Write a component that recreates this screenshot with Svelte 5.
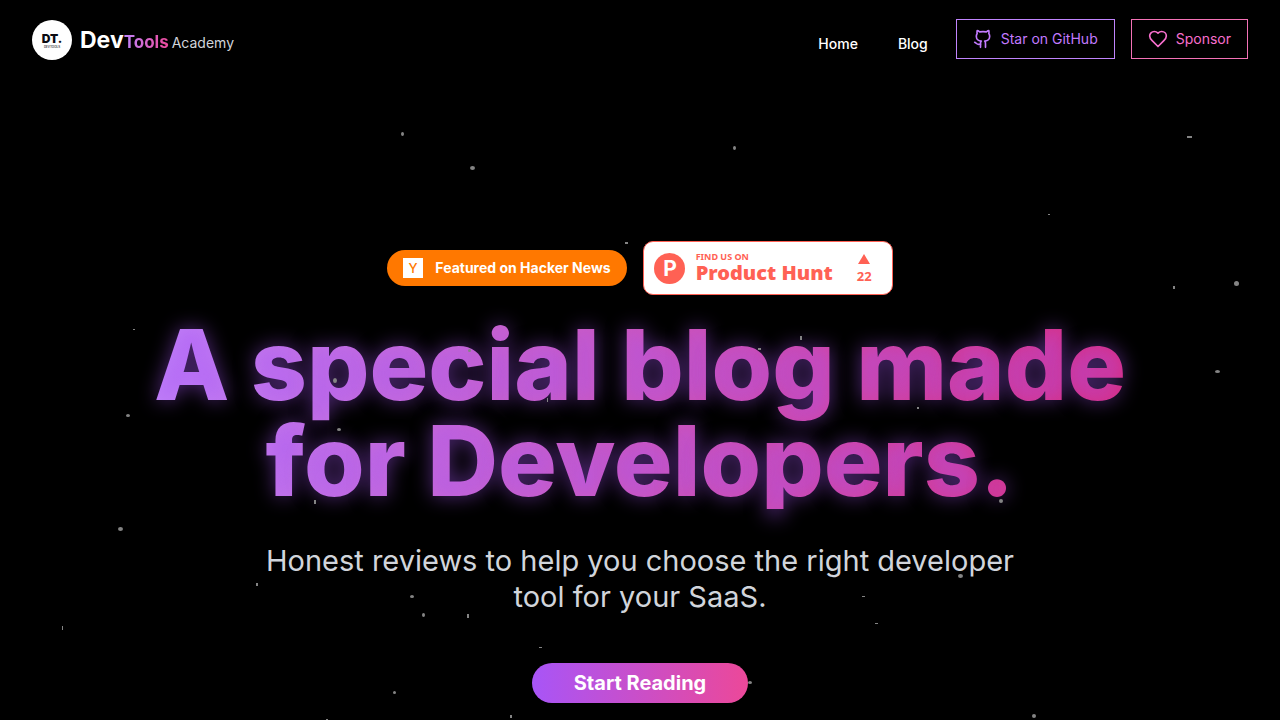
<script lang="ts">
  type Star = { x: number; y: number; w: number; h: number };

  // Star field on a 1280 x 720 canvas: centre and size.
  const stars: Star[] = [
    { x: 402, y: 134, w: 3, h: 4 },
    { x: 472, y: 168, w: 5, h: 4 },
    { x: 734, y: 148, w: 3, h: 4 },
    { x: 1189, y: 137, w: 5, h: 2 },
    { x: 1049, y: 214, w: 2, h: 1 },
    { x: 626, y: 243, w: 3, h: 2 },
    { x: 1174, y: 287, w: 2, h: 3 },
    { x: 1236, y: 283, w: 5, h: 5 },
    { x: 134, y: 329, w: 2, h: 1 },
    { x: 1217, y: 371, w: 5, h: 3 },
    { x: 801, y: 338, w: 2, h: 4 },
    { x: 469, y: 350, w: 3, h: 3 },
    { x: 759, y: 349, w: 3, h: 2 },
    { x: 335, y: 380, w: 4, h: 5 },
    { x: 547, y: 400, w: 1, h: 4 },
    { x: 918, y: 408, w: 2, h: 2 },
    { x: 128, y: 415, w: 4, h: 3 },
    { x: 339, y: 429, w: 4, h: 3 },
    { x: 315, y: 502, w: 2, h: 4 },
    { x: 1001, y: 501, w: 4, h: 4 },
    { x: 120, y: 529, w: 5, h: 4 },
    { x: 960, y: 576, w: 5, h: 4 },
    { x: 257, y: 584, w: 2, h: 3 },
    { x: 412, y: 596, w: 4, h: 3 },
    { x: 863, y: 596, w: 3, h: 1 },
    { x: 423, y: 615, w: 3, h: 4 },
    { x: 468, y: 616, w: 2, h: 4 },
    { x: 876, y: 623, w: 3, h: 1 },
    { x: 62, y: 628, w: 1, h: 4 },
    { x: 540, y: 647, w: 3, h: 1 },
    { x: 750, y: 682, w: 4, h: 3 },
    { x: 394, y: 692, w: 3, h: 3 },
    { x: 511, y: 716, w: 2, h: 3 },
    { x: 1034, y: 716, w: 4, h: 4 },
    { x: 327, y: 720, w: 2, h: 2 },
  ];

  const left = (s: Star) => ((s.x - Math.floor(s.w / 2)) / 1280) * 100;
  const top = (s: Star) => ((s.y - Math.floor(s.h / 2)) / 720) * 100;
</script>

<div class="page">
  <header>
    <a class="brand" href="/">
      <svg class="logo" viewBox="0 0 40 40" aria-hidden="true">
        <circle cx="20" cy="20" r="20" fill="#fff" />
        <text class="mark" x="20" y="23" text-anchor="middle">DT.</text>
        <text class="sub" x="20" y="28" text-anchor="middle">DEVTOOLS</text>
      </svg>
      <span class="name"><b class="dev">Dev</b><b class="tools">Tools</b><span class="academy">Academy</span></span>
    </a>

    <nav>
      <div class="links">
        <a href="/">Home</a>
        <a href="/blog">Blog</a>
      </div>
      <div class="actions">
        <a class="action github" href="https://github.com">
          <svg viewBox="0 0 24 24" aria-hidden="true">
            <path d="M15 22v-4a4.8 4.8 0 0 0-1-3.5c3 0 6-2 6-5.5.08-1.25-.27-2.48-1-3.5.28-1.15.28-2.35 0-3.5 0 0-1 0-3 1.5-2.64-.5-5.36-.5-8 0C6 2 5 2 5 2c-.3 1.15-.3 2.35 0 3.5A5.403 5.403 0 0 0 4 9c0 3.5 3 5.5 6 5.5-.39.49-.68 1.05-.85 1.65-.17.6-.22 1.23-.15 1.85v4" />
            <path d="M9 18c-4.51 2-5-2-7-2" />
          </svg>
          Star on GitHub
        </a>
        <a class="action sponsor" href="/sponsor">
          <svg viewBox="0 0 24 24" aria-hidden="true">
            <path d="M19 14c1.49-1.46 3-3.21 3-5.5A5.5 5.5 0 0 0 16.5 3c-1.76 0-3 .5-4.5 2-1.5-1.5-2.74-2-4.5-2A5.5 5.5 0 0 0 2 8.5c0 2.3 1.5 4.05 3 5.5l7 7Z" />
          </svg>
          Sponsor
        </a>
      </div>
    </nav>
  </header>

  <main>
    <div class="badges">
      <a class="hn" href="https://news.ycombinator.com">
        <svg viewBox="0 0 20 20" aria-hidden="true">
          <rect width="20" height="20" fill="#fff" />
          <text x="10" y="15" text-anchor="middle">Y</text>
        </svg>
        <span>Featured on Hacker News</span>
      </a>
      <a class="ph" href="https://www.producthunt.com">
        <svg viewBox="0 0 31 31" aria-hidden="true">
          <circle cx="15.5" cy="15.5" r="15.5" />
          <text x="16" y="23" text-anchor="middle">P</text>
        </svg>
        <span class="ph-text"><small>FIND US ON</small><strong>Product Hunt</strong></span>
        <span class="votes"><i class="up"></i>22</span>
      </a>
    </div>

    <h1>A special blog made for Developers.</h1>
    <p>Honest reviews to help you choose the right developer tool for your SaaS.</p>
    <a class="cta" href="/blog">Start Reading</a>
  </main>

  <div class="sky" aria-hidden="true">
    {#each stars as s}
      <i
        class="star"
        class:round={Math.min(s.w, s.h) > 2}
        style="left: {left(s)}%; top: {top(s)}%; width: {s.w}px; height: {s.h}px"
      ></i>
    {/each}
  </div>
</div>

<style>
  :global(body) {
    margin: 0;
    background: #000;
  }
  .page {
    position: relative;
    min-height: 100vh;
    overflow: hidden;
    background: #000;
    color: #fff;
    font-family: Inter, "Liberation Sans", sans-serif;
  }
  a {
    color: inherit;
    text-decoration: none;
  }
  .sky {
    position: absolute;
    inset: 0;
    height: 100vh;
    pointer-events: none;
  }
  .star {
    position: absolute;
    background: #848484;
  }
  .star.round {
    border-radius: 50%;
  }

  header {
    display: flex;
    align-items: flex-start;
    justify-content: space-between;
    padding: 19px 32px 0;
  }
  .brand {
    display: flex;
    align-items: center;
    gap: 8px;
    padding-top: 1px;
  }
  .logo {
    width: 40px;
    height: 40px;
    fill: #0b0b12;
  }
  .mark {
    font-size: 12px;
    font-weight: 900;
  }
  .sub {
    font-size: 3px;
    font-weight: 500;
  }
  .name {
    display: flex;
    align-items: baseline;
    padding-top: 2px;
    line-height: 32px;
  }
  .dev {
    font-size: 23px;
  }
  .tools {
    font-size: 17px;
    background: linear-gradient(to right, #c084fc, #ec4899);
    background-clip: text;
    color: transparent;
  }
  .academy {
    margin-left: 3px;
    font-size: 14px;
    color: #d1d5db;
  }
  nav {
    display: flex;
    align-items: center;
    gap: 28px;
    font-size: 14px;
  }
  .links {
    display: flex;
    gap: 40px;
    padding-top: 8px;
    font-weight: 500;
  }
  .actions {
    display: flex;
    gap: 16px;
  }
  .action {
    display: flex;
    align-items: center;
    gap: 8px;
    padding: 0 16px;
    border: 1px solid;
    line-height: 38px;
  }
  .action svg {
    width: 20px;
    height: 20px;
    fill: none;
    stroke: currentColor;
    stroke-width: 2;
    stroke-linecap: round;
    stroke-linejoin: round;
  }
  .github {
    border-color: #c084fc;
    color: #c27aff;
  }
  .sponsor {
    border-color: #f472b6;
    color: #f76fcd;
  }

  main {
    display: flex;
    flex-direction: column;
    align-items: center;
    padding: 181px 32px 17px;
    text-align: center;
  }
  .badges {
    display: flex;
    align-items: center;
    gap: 16px;
  }
  .hn {
    display: flex;
    align-items: center;
    gap: 12px;
    padding: 0 16px;
    border-radius: 18px;
    background: #ff7800;
    font-size: 14px;
    font-weight: 700;
    line-height: 36px;
  }
  .hn svg {
    width: 20px;
    height: 20px;
  }
  .hn text {
    font-size: 13px;
    font-weight: 500;
    fill: #ff7800;
  }
  .ph {
    display: flex;
    align-items: center;
    box-sizing: border-box;
    width: 250px;
    height: 54px;
    padding: 0 20px 0 10px;
    border: 1px solid #ff6154;
    border-radius: 10px;
    background: #fff;
    color: #ff6154;
    font-family: "Noto Sans", "Open Sans", sans-serif;
    font-weight: 700;
    text-align: left;
  }
  .ph svg {
    width: 31px;
    height: 31px;
    fill: #ff6154;
  }
  .ph text {
    font-family: Inter, sans-serif;
    font-size: 21px;
    font-weight: 700;
    fill: #fff;
  }
  .ph-text {
    display: flex;
    flex-direction: column;
    flex: 1;
    margin-left: 11px;
  }
  .ph-text small {
    font-size: 9px;
    line-height: 10px;
  }
  .ph-text strong {
    font-size: 20px;
    line-height: 22px;
  }
  .votes {
    display: flex;
    flex-direction: column;
    align-items: center;
    gap: 4px;
    padding-top: 2px;
    font-size: 13px;
    line-height: 16px;
  }
  .up {
    border: 6px solid transparent;
    border-top: 0;
    border-bottom: 10px solid #ff6154;
  }

  h1 {
    max-width: 1024px;
    margin: 22px 0 0;
    font-size: 98px;
    font-weight: 800;
    line-height: 96px;
    background: linear-gradient(to right, #c084fc, #db2777);
    background-clip: text;
    color: transparent;
    text-shadow: 0 0 20px rgba(168, 85, 247, 0.5);
  }
  p {
    max-width: 768px;
    margin: 34px 0 0;
    font-size: 29px;
    line-height: 36px;
    color: #d1d5db;
  }
  .cta {
    margin-top: 48px;
    padding: 0 42px;
    border-radius: 20px;
    background: linear-gradient(to right, #a855f7, #ec4899);
    font-size: 20px;
    font-weight: 700;
    line-height: 40px;
  }
</style>
